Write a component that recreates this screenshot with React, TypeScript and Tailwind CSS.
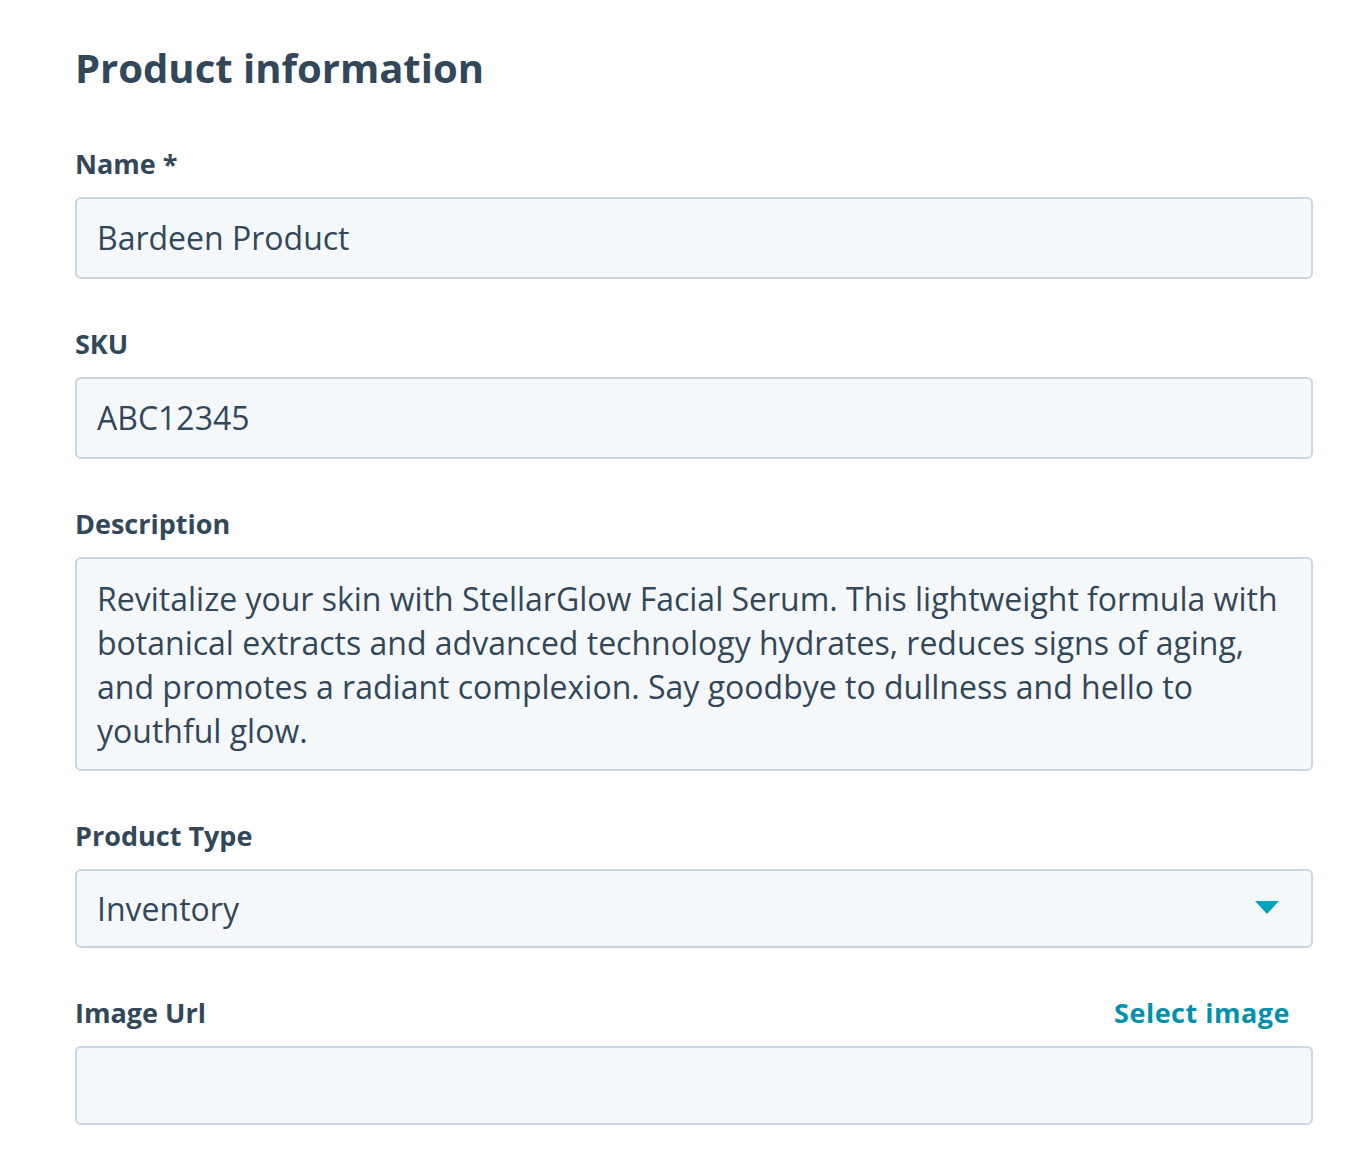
import React from "react";

const font = { fontFamily: "'Open Sans', 'Noto Sans', sans-serif" };

function Label({ children, right }: { children: React.ReactNode; right?: React.ReactNode }) {
  return (
    <div className="flex items-center justify-between h-[32px] pr-[23px]">
      <span className="text-[27px] leading-[32px] font-bold text-[#33475b]">{children}</span>
      {right}
    </div>
  );
}

export default function App() {
  return (
    <div className="min-h-screen bg-white pl-[75px] pr-[55px] pt-[44px] text-[#33475b]" style={font}>
      <h1 className="text-[40px] leading-[48px] font-bold">Product information</h1>

      <div className="mt-[56px]">
        <Label>Name *</Label>
        <div className="mt-[17px] h-[82px] flex items-center px-[20px] bg-[#f5f8fa] border-2 border-[#cbd6e2] rounded-[6px] text-[32px]">
          Bardeen Product
        </div>
      </div>

      <div className="mt-[49px]">
        <Label>SKU</Label>
        <div className="mt-[17px] h-[82px] flex items-center px-[20px] bg-[#f5f8fa] border-2 border-[#cbd6e2] rounded-[6px] text-[32px]">
          ABC12345
        </div>
      </div>

      <div className="mt-[49px]">
        <Label>Description</Label>
        <div className="mt-[17px] h-[214px] pt-[18px] pb-[16px] pl-[20px] pr-[18px] bg-[#f5f8fa] border-2 border-[#cbd6e2] rounded-[6px] text-[32px] leading-[44px]">
          Revitalize your skin with StellarGlow Facial Serum. This lightweight formula with botanical extracts and advanced technology hydrates, reduces signs of aging, and promotes a radiant complexion. Say goodbye to dullness and hello to youthful glow.
        </div>
      </div>

      <div className="mt-[49px]">
        <Label>Product Type</Label>
        <div className="mt-[17px] h-[79px] flex items-center justify-between pl-[20px] pr-[32px] bg-[#f5f8fa] border-2 border-[#cbd6e2] rounded-[6px] text-[32px]">
          <span>Inventory</span>
          <svg width="24" height="13" viewBox="0 0 24 13" className="mt-[-2px]">
            <path d="M0 0 H24 L12 13 Z" fill="#00a4bd" />
          </svg>
        </div>
      </div>

      <div className="mt-[49px]">
        <Label right={<span className="text-[27px] leading-[32px] font-bold text-[#0091ae] tracking-[0.5px]">Select image</span>}>Image Url</Label>
        <div className="mt-[17px] h-[79px] bg-[#f5f8fa] border-2 border-[#cbd6e2] rounded-[6px]"></div>
      </div>
    </div>
  );
}
